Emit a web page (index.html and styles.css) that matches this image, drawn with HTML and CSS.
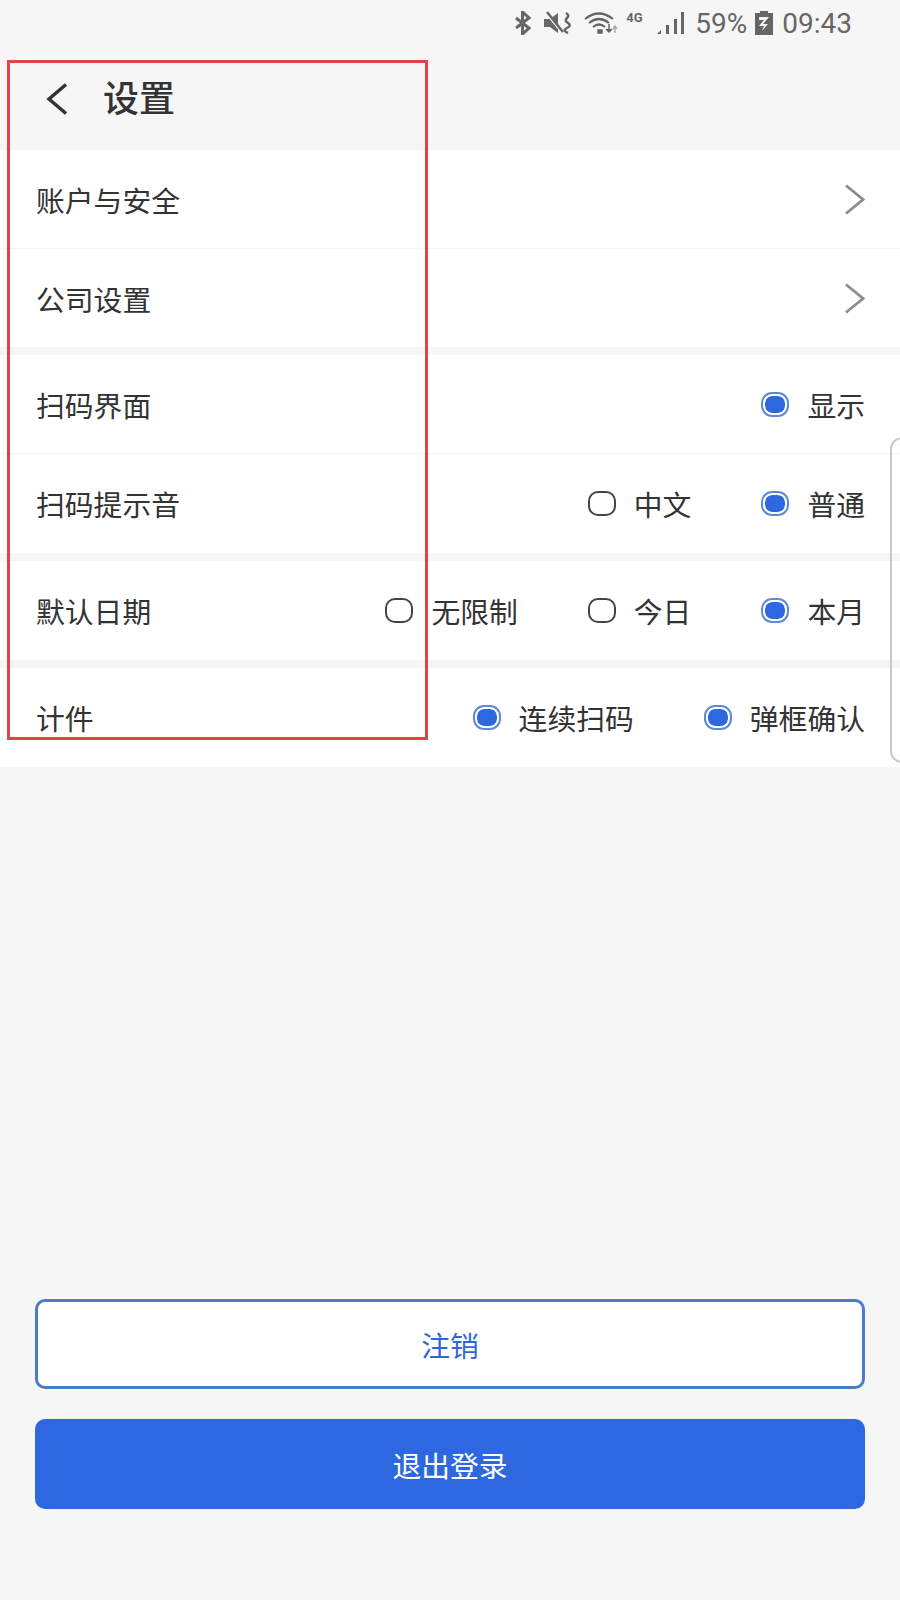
FILE: index.html
```html
<!DOCTYPE html>
<html lang="zh-CN">
<head>
<meta charset="utf-8">
<title>设置</title>
<link rel="stylesheet" href="styles.css">
</head>
<body>
<div class="page">
  <div class="status">
    <svg class="si" width="18" height="24" viewBox="0 0 18 24"><path d="M2 7l13 10-6.500 6V1l6.500 6L2 17" fill="none" stroke="#666" stroke-width="3"/></svg>
    <svg class="si" width="28" height="24" viewBox="0 0 28 24"><path d="M0 8h6l8-6v20l-8-6H0z" fill="#666"/><path d="M2 2l16 20" stroke="#f6f6f6" stroke-width="2"/><path d="M3 1l16 20" stroke="#666" stroke-width="2.500"/><path d="M22 2q4 2.500 1 5t1 5-1 5 1 5" fill="none" stroke="#666" stroke-width="2.500"/></svg>
    <svg class="si wifi" width="35" height="24" viewBox="0 0 35 24"><path d="M1 8q14-11 28 0M5 12q10-8 20 0M9 16q6-5 12 0" fill="none" stroke="#666" stroke-width="2.200"/><path d="M14 19h4v3h-4zM25 13v7M22 18l3 3 3-3" fill="#666" stroke="#666" stroke-width="1.500"/><path d="M31 22v-6M29 18l2-3 2 3" fill="none" stroke="#aaa" stroke-width="1.500"/></svg>
    <span class="net">4G</span>
    <svg class="si sig" width="27" height="24" viewBox="0 0 27 24"><path d="M0 23l4-4v4zM9 14h3v9H9zM17 8h3v15h-3zM24 1h3v22h-3z" fill="#666"/></svg>
    <span class="st pct">59%</span>
    <svg class="si" width="18" height="24" viewBox="0 0 18 24"><path d="M5 0h8v2h5v22H0V2h5z" fill="#666"/><path d="M4 6h10L8 13h5l-6 7 2-5H4l5-6H4z" fill="#f6f6f6"/></svg>
    <span class="st time">09:43</span>
  </div>

  <header class="bar">
    <svg class="back" width="22" height="32" viewBox="0 0 22 32"><path d="M20 1.500L3 16l17 14.500" fill="none" stroke="#333" stroke-width="3.500"/></svg>
    <h1 class="title">设置</h1>
  </header>

  <section class="group">
    <div class="row line"><span>账户与安全</span>
      <svg class="chev" width="21" height="31" viewBox="0 0 21 31"><path d="M2 1.500L19 15.500 2 29.500" fill="none" stroke="#8c8c8c" stroke-width="2.800"/></svg></div>
    <div class="row short"><span>公司设置</span>
      <svg class="chev" width="21" height="31" viewBox="0 0 21 31"><path d="M2 1.500L19 15.500 2 29.500" fill="none" stroke="#8c8c8c" stroke-width="2.800"/></svg></div>
  </section>

  <section class="group">
    <div class="row line"><span>扫码界面</span>
      <div class="opts"><div class="opt"><i class="radio on"></i><span>显示</span></div></div></div>
    <div class="row"><span>扫码提示音</span>
      <div class="opts"><div class="opt"><i class="radio"></i><span>中文</span></div><div class="opt"><i class="radio on"></i><span>普通</span></div></div></div>
  </section>

  <section class="group">
    <div class="row"><span>默认日期</span>
      <div class="opts"><div class="opt"><i class="radio"></i><span>无限制</span></div><div class="opt"><i class="radio"></i><span>今日</span></div><div class="opt"><i class="radio on"></i><span>本月</span></div></div></div>
  </section>

  <section class="group">
    <div class="row"><span>计件</span>
      <div class="opts"><div class="opt"><i class="radio on"></i><span>连续扫码</span></div><div class="opt"><i class="radio on"></i><span>弹框确认</span></div></div></div>
  </section>

  <div class="actions">
    <button class="btn ghost">注销</button>
    <button class="btn solid">退出登录</button>
  </div>

  <div class="mark"></div>
  <div class="handle"></div>
</div>
</body>
</html>
```
FILE: styles.css
```css
* { box-sizing: border-box; }
html, body { margin: 0; padding: 0; }
body {
  background: #f6f6f6;
  font-family: "Noto Sans CJK SC", "Noto Sans", sans-serif;
  color: #333;
}
.page {
  position: relative;
  width: 900px;
  height: 1600px;
  display: flex;
  flex-direction: column;
  overflow: hidden;
}
.status {
  height: 60px;
  display: flex;
  align-items: flex-start;
  justify-content: flex-end;
  padding: 11px 48px 0 0;
  color: #666;
}
.si { display: block; flex: none; }
.status .si { margin-left: 12px; }
.status .wifi { margin-left: 12px; }
.net {
  font-family: Roboto, sans-serif;
  font-weight: 700;
  font-size: 13px;
  line-height: 14px;
  margin: 0 0 0 7px;
  width: 21px;
}
.status .sig { margin-left: 10px; }
.st {
  font-family: Roboto, sans-serif;
  font-size: 28px;
  line-height: 26px;
}
.pct { margin-left: 11px; }
.status .time { margin-left: 9px; }
.status .pct + .si { margin-left: 8px; }
.bar {
  height: 90px;
  display: flex;
  align-items: flex-start;
  padding: 22px 0 0 46px;
}
.back { margin-top: 1px; }
.title {
  margin: -12px 0 0 35px;
  font-size: 36px;
  line-height: 52px;
  font-weight: 500;
  color: #333;
}
.group { background: #fff; margin-bottom: 8px; }
.row {
  height: 99px;
  display: flex;
  align-items: center;
  justify-content: space-between;
  padding: 0 35px 0 36px;
  font-size: 28.800px;
}
.row.short { height: 98px; }
.row.line { border-bottom: 1px solid #f5f5f5; }
.chev { display: block; }
.opts { display: flex; gap: 70px; align-items: center; }
.opt { display: flex; align-items: center; gap: 18px; }
.radio {
  display: block;
  width: 28px;
  height: 25px;
  border: 2.500px solid #444;
  border-radius: 10px;
  background: #fff;
}
.radio.on {
  border: 2px solid #5d8ad6;
  padding: 2px;
  background: #2d68e0;
  background-clip: content-box;
  border-radius: 11px;
  box-shadow: inset 0 0 0 2px #fff;
}
.actions {
  margin-top: auto;
  padding: 0 35px 91px;
  display: flex;
  flex-direction: column;
  gap: 30px;
}
.btn {
  display: block;
  width: 830px;
  height: 90px;
  border-radius: 10px;
  font-family: inherit;
  font-size: 28.800px;
  padding: 0;
}
.ghost { background: #fff; border: 3px solid #4d7cc6; color: #2f68d0; }
.solid { background: #2d68e0; border: 0; color: #fff; }
.mark {
  position: absolute;
  left: 7px;
  top: 60px;
  width: 421px;
  height: 680px;
  border: 3px solid #e04444;
}
.handle {
  position: absolute;
  left: 890px;
  top: 437px;
  width: 20px;
  height: 326px;
  border: 2px solid #c8c8c8;
  border-radius: 12px 0 0 12px;
}
```
